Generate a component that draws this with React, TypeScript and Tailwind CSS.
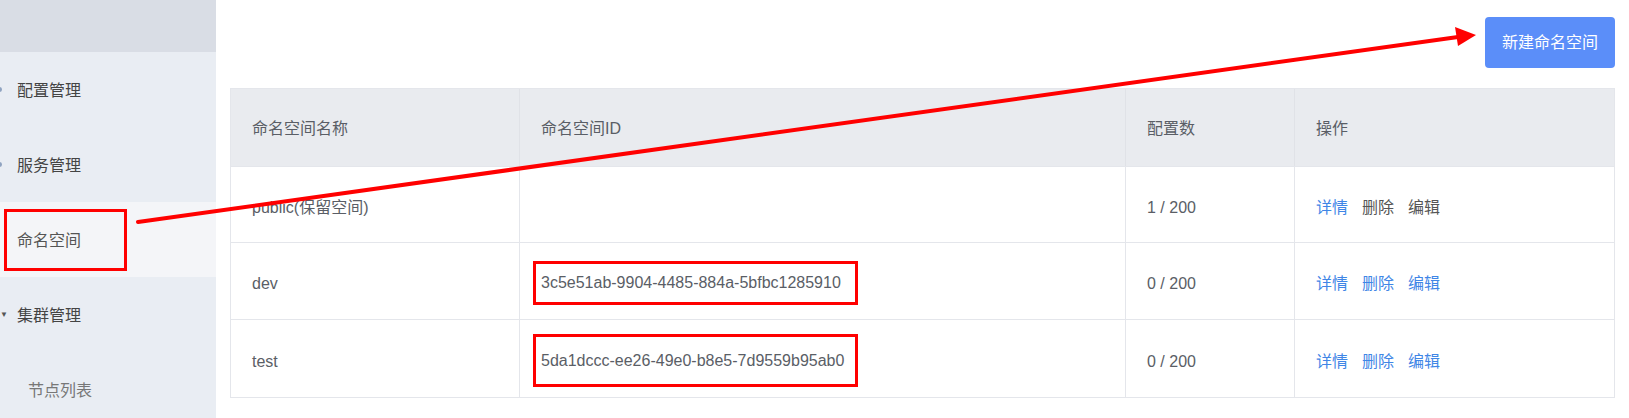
import React from 'react';

const font = { fontFamily: '"Liberation Sans", "Noto Sans CJK SC", sans-serif' };

const menu = [
  { label: '配置管理', mark: 'dot' },
  { label: '服务管理', mark: 'dot' },
  { label: '命名空间', mark: 'none', active: true },
  { label: '集群管理', mark: 'caret' },
  { label: '节点列表', mark: 'none', sub: true },
];

const rows = [
  { name: 'public(保留空间)', id: '', count: '1 / 200', locked: true, h: 'h-[76px]' },
  { name: 'dev', id: '3c5e51ab-9904-4485-884a-5bfbc1285910', count: '0 / 200', boxH: 'h-[44px]', h: 'h-[77px]' },
  { name: 'test', id: '5da1dccc-ee26-49e0-b8e5-7d9559b95ab0', count: '0 / 200', boxH: 'h-[53px]', h: 'h-[77px]' },
];

const cols = 'grid grid-cols-[288px_606px_169px_1fr]';

function Sidebar() {
  return (
    <div className="w-[216px] shrink-0 h-[418px] overflow-hidden bg-[#e9edf3] flex flex-col">
      <div className="h-[52px] shrink-0 bg-[#d9dde5]" />
      {menu.map((m) => (
        <div
          key={m.label}
          className={`h-[75px] shrink-0 flex items-center relative ${m.active ? 'bg-[#f4f5f8]' : ''}`}
        >
          {m.mark === 'dot' && <span className="absolute left-[-3px] w-[5px] h-[5px] rounded-full bg-[#8fa3c0]" />}
          {m.mark === 'caret' && <span className="absolute left-0 text-[8px] leading-none text-[#555]">▼</span>}
          {m.active ? (
            <div className="ml-[4px] w-[123px] h-[62px] border-[3px] border-[#ff0000] pl-[10px] pt-[2px] flex items-center text-[16px] text-[#555]">
              {m.label}
            </div>
          ) : (
            <span className={`pt-[2px] text-[16px] ${m.sub ? 'ml-[28px] text-[#777]' : 'ml-[17px] text-[#444]'}`}>
              {m.label}
            </span>
          )}
        </div>
      ))}
    </div>
  );
}

function Ops({ locked }: { locked?: boolean }) {
  return (
    <div className="flex gap-[14px]">
      <span className="text-[#3f86e6]">详情</span>
      <span className={locked ? 'text-[#555]' : 'text-[#3f86e6]'}>删除</span>
      <span className={locked ? 'text-[#555]' : 'text-[#3f86e6]'}>编辑</span>
    </div>
  );
}

export default function App() {
  return (
    <div className="relative w-[1629px] h-[418px] overflow-hidden bg-white flex text-[16px]" style={font}>
      <Sidebar />
      <div className="flex-1 px-[14px]">
        <div className="pt-[17px] flex justify-end">
          <button className="w-[130px] h-[51px] rounded-[4px] bg-[#5b8ef9] text-white text-[16px]">
            新建命名空间
          </button>
        </div>
        <div className="mt-[20px] border border-[#e4e6eb] text-[#5a5e66]">
          <div className={`${cols} h-[78px] bg-[#e9ebef] border-b border-[#e4e6eb]`}>
            <div className="pl-[21px] pt-[2px] flex items-center">命名空间名称</div>
            <div className="pl-[21px] pt-[2px] flex items-center border-l border-[#e0e2e7]">命名空间ID</div>
            <div className="pl-[21px] pt-[2px] flex items-center border-l border-[#e0e2e7]">配置数</div>
            <div className="pl-[21px] pt-[2px] flex items-center border-l border-[#e0e2e7]">操作</div>
          </div>
          {rows.map((r, i) => (
            <div
              key={r.name}
              className={`${cols} ${r.h} ${i < rows.length - 1 ? 'border-b border-[#e4e6eb]' : ''}`}
            >
              <div className="pl-[21px] pt-[6px] flex items-center">{r.name}</div>
              <div className="pl-[13px] pt-[4px] flex items-center border-l border-[#e4e6eb]">
                {r.id && (
                  <div className={`w-[325px] ${r.boxH} border-[3px] border-[#ff0000] pl-[5px] flex items-center`}>
                    {r.id}
                  </div>
                )}
              </div>
              <div className="pl-[21px] pt-[6px] flex items-center border-l border-[#e4e6eb]">{r.count}</div>
              <div className="pl-[21px] pt-[6px] flex items-center border-l border-[#e4e6eb]">
                <Ops locked={r.locked} />
              </div>
            </div>
          ))}
        </div>
      </div>
      {/* annotation arrow */}
      <svg className="absolute left-0 top-0 pointer-events-none" width="1629" height="418">
        <line x1="138" y1="222" x2="1458" y2="37" stroke="#ff0000" strokeWidth="4" strokeLinecap="round" />
        <polygon points="1476,35 1455,27 1458,46" fill="#ff0000" />
      </svg>
    </div>
  );
}
